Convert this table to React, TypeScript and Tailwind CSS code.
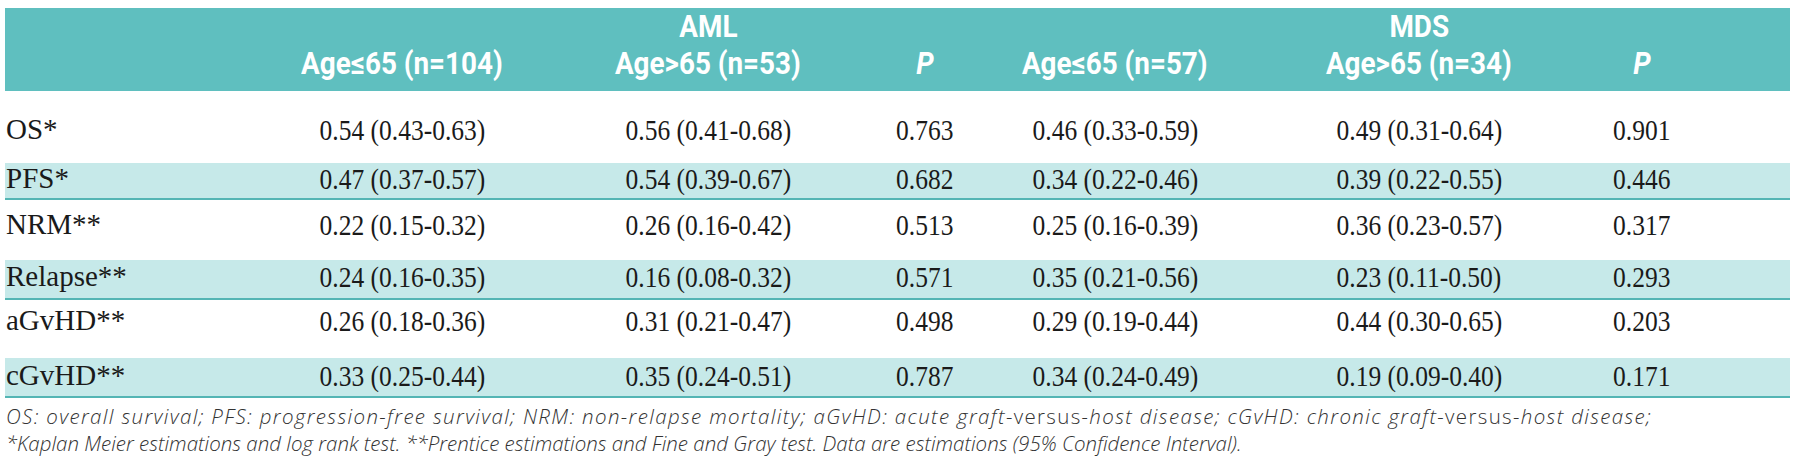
import React from 'react'

type Row = {
  label: string
  values: string[]
  shaded: boolean
  rowClass: string
}

const ROWS: Row[] = [
  {
    label: 'OS*',
    values: ['0.54 (0.43-0.63)', '0.56 (0.41-0.68)', '0.763', '0.46 (0.33-0.59)', '0.49 (0.31-0.64)', '0.901'],
    shaded: false,
    rowClass: 'h-[72px] pt-[25px]',
  },
  {
    label: 'PFS*',
    values: ['0.47 (0.37-0.57)', '0.54 (0.39-0.67)', '0.682', '0.34 (0.22-0.46)', '0.39 (0.22-0.55)', '0.446'],
    shaded: true,
    rowClass: 'h-[37px] pt-[2px]',
  },
  {
    label: 'NRM**',
    values: ['0.22 (0.15-0.32)', '0.26 (0.16-0.42)', '0.513', '0.25 (0.16-0.39)', '0.36 (0.23-0.57)', '0.317'],
    shaded: false,
    rowClass: 'h-[60px] pt-[11px]',
  },
  {
    label: 'Relapse**',
    values: ['0.24 (0.16-0.35)', '0.16 (0.08-0.32)', '0.571', '0.35 (0.21-0.56)', '0.23 (0.11-0.50)', '0.293'],
    shaded: true,
    rowClass: 'h-[40px] pt-[3px]',
  },
  {
    label: 'aGvHD**',
    values: ['0.26 (0.18-0.36)', '0.31 (0.21-0.47)', '0.498', '0.29 (0.19-0.44)', '0.44 (0.30-0.65)', '0.203'],
    shaded: false,
    rowClass: 'h-[58px] pt-[7px]',
  },
  {
    label: 'cGvHD**',
    values: ['0.33 (0.25-0.44)', '0.35 (0.24-0.51)', '0.787', '0.34 (0.24-0.49)', '0.19 (0.09-0.40)', '0.171'],
    shaded: true,
    rowClass: 'h-[40px] pt-[4px]',
  },
]

// label | AML ≤65 | AML >65 | P | MDS ≤65 | MDS >65 | P | spare
const GRID = 'grid grid-cols-[245px_304px_308px_126px_254px_354px_92px_1fr]'

function HeadText({ children, italic }: { children: React.ReactNode; italic?: boolean }) {
  return (
    <span className={['inline-block scale-x-[0.87] whitespace-nowrap', italic ? 'italic' : ''].join(' ')}>
      {children}
    </span>
  )
}

export default function App() {
  return (
    <div className="bg-white w-[1800px] h-[470px] pt-2 pl-[5px] pr-[10px] text-[#1a1a1a]">
      {/* header */}
      <div
        className="bg-[#5fbfbf] h-[83px] text-white font-bold text-[32px] leading-[37px]"
        style={{ fontFamily: 'Roboto, "Liberation Sans", sans-serif' }}
      >
        <div className={GRID}>
          <div />
          <div />
          <div className="text-center"><HeadText>AML</HeadText></div>
          <div />
          <div />
          <div className="text-center"><HeadText>MDS</HeadText></div>
          <div />
          <div />
        </div>
        <div className={GRID}>
          <div />
          <div className="text-center"><HeadText>Age≤65 (n=104)</HeadText></div>
          <div className="text-center"><HeadText>Age&gt;65 (n=53)</HeadText></div>
          <div className="text-center"><HeadText italic>P</HeadText></div>
          <div className="text-center"><HeadText>Age≤65 (n=57)</HeadText></div>
          <div className="text-center"><HeadText>Age&gt;65 (n=34)</HeadText></div>
          <div className="text-center"><HeadText italic>P</HeadText></div>
          <div />
        </div>
      </div>

      {/* body rows */}
      <div className="leading-[27px]" style={{ fontFamily: '"Liberation Serif", serif' }}>
        {ROWS.map((row) => (
          <div
            key={row.label}
            className={[
              GRID,
              'items-start box-border',
              row.rowClass,
              row.shaded ? 'bg-[#c6e9e9] border-b-2 border-[#54b5b4]' : 'bg-white',
            ].join(' ')}
          >
            <div className="pl-[1px] whitespace-nowrap text-[29px]">{row.label}</div>
            {row.values.map((v, i) => (
              <div key={i} className="text-center whitespace-nowrap text-[30px]">
                <span className="inline-block scale-x-[0.85]">{v}</span>
              </div>
            ))}
            <div />
          </div>
        ))}
      </div>

      {/* footnotes */}
      <div
        className="pt-[5px] pl-[1px] text-[20.5px] leading-[27px] italic font-light text-[#333]"
        style={{ fontFamily: '"Open Sans", sans-serif' }}
      >
        <p className="whitespace-nowrap tracking-[1.35px]">
          OS: overall survival; PFS: progression-free survival; NRM: non-relapse mortality; aGvHD: acute graft-
          <span className="not-italic">versus</span>-host disease; cGvHD: chronic graft-
          <span className="not-italic">versus</span>-host disease;
        </p>
        <p className="whitespace-nowrap">
          *Kaplan Meier estimations and log rank test. **Prentice estimations and Fine and Gray test. Data are
          estimations (95% Confidence Interval).
        </p>
      </div>
    </div>
  )
}
